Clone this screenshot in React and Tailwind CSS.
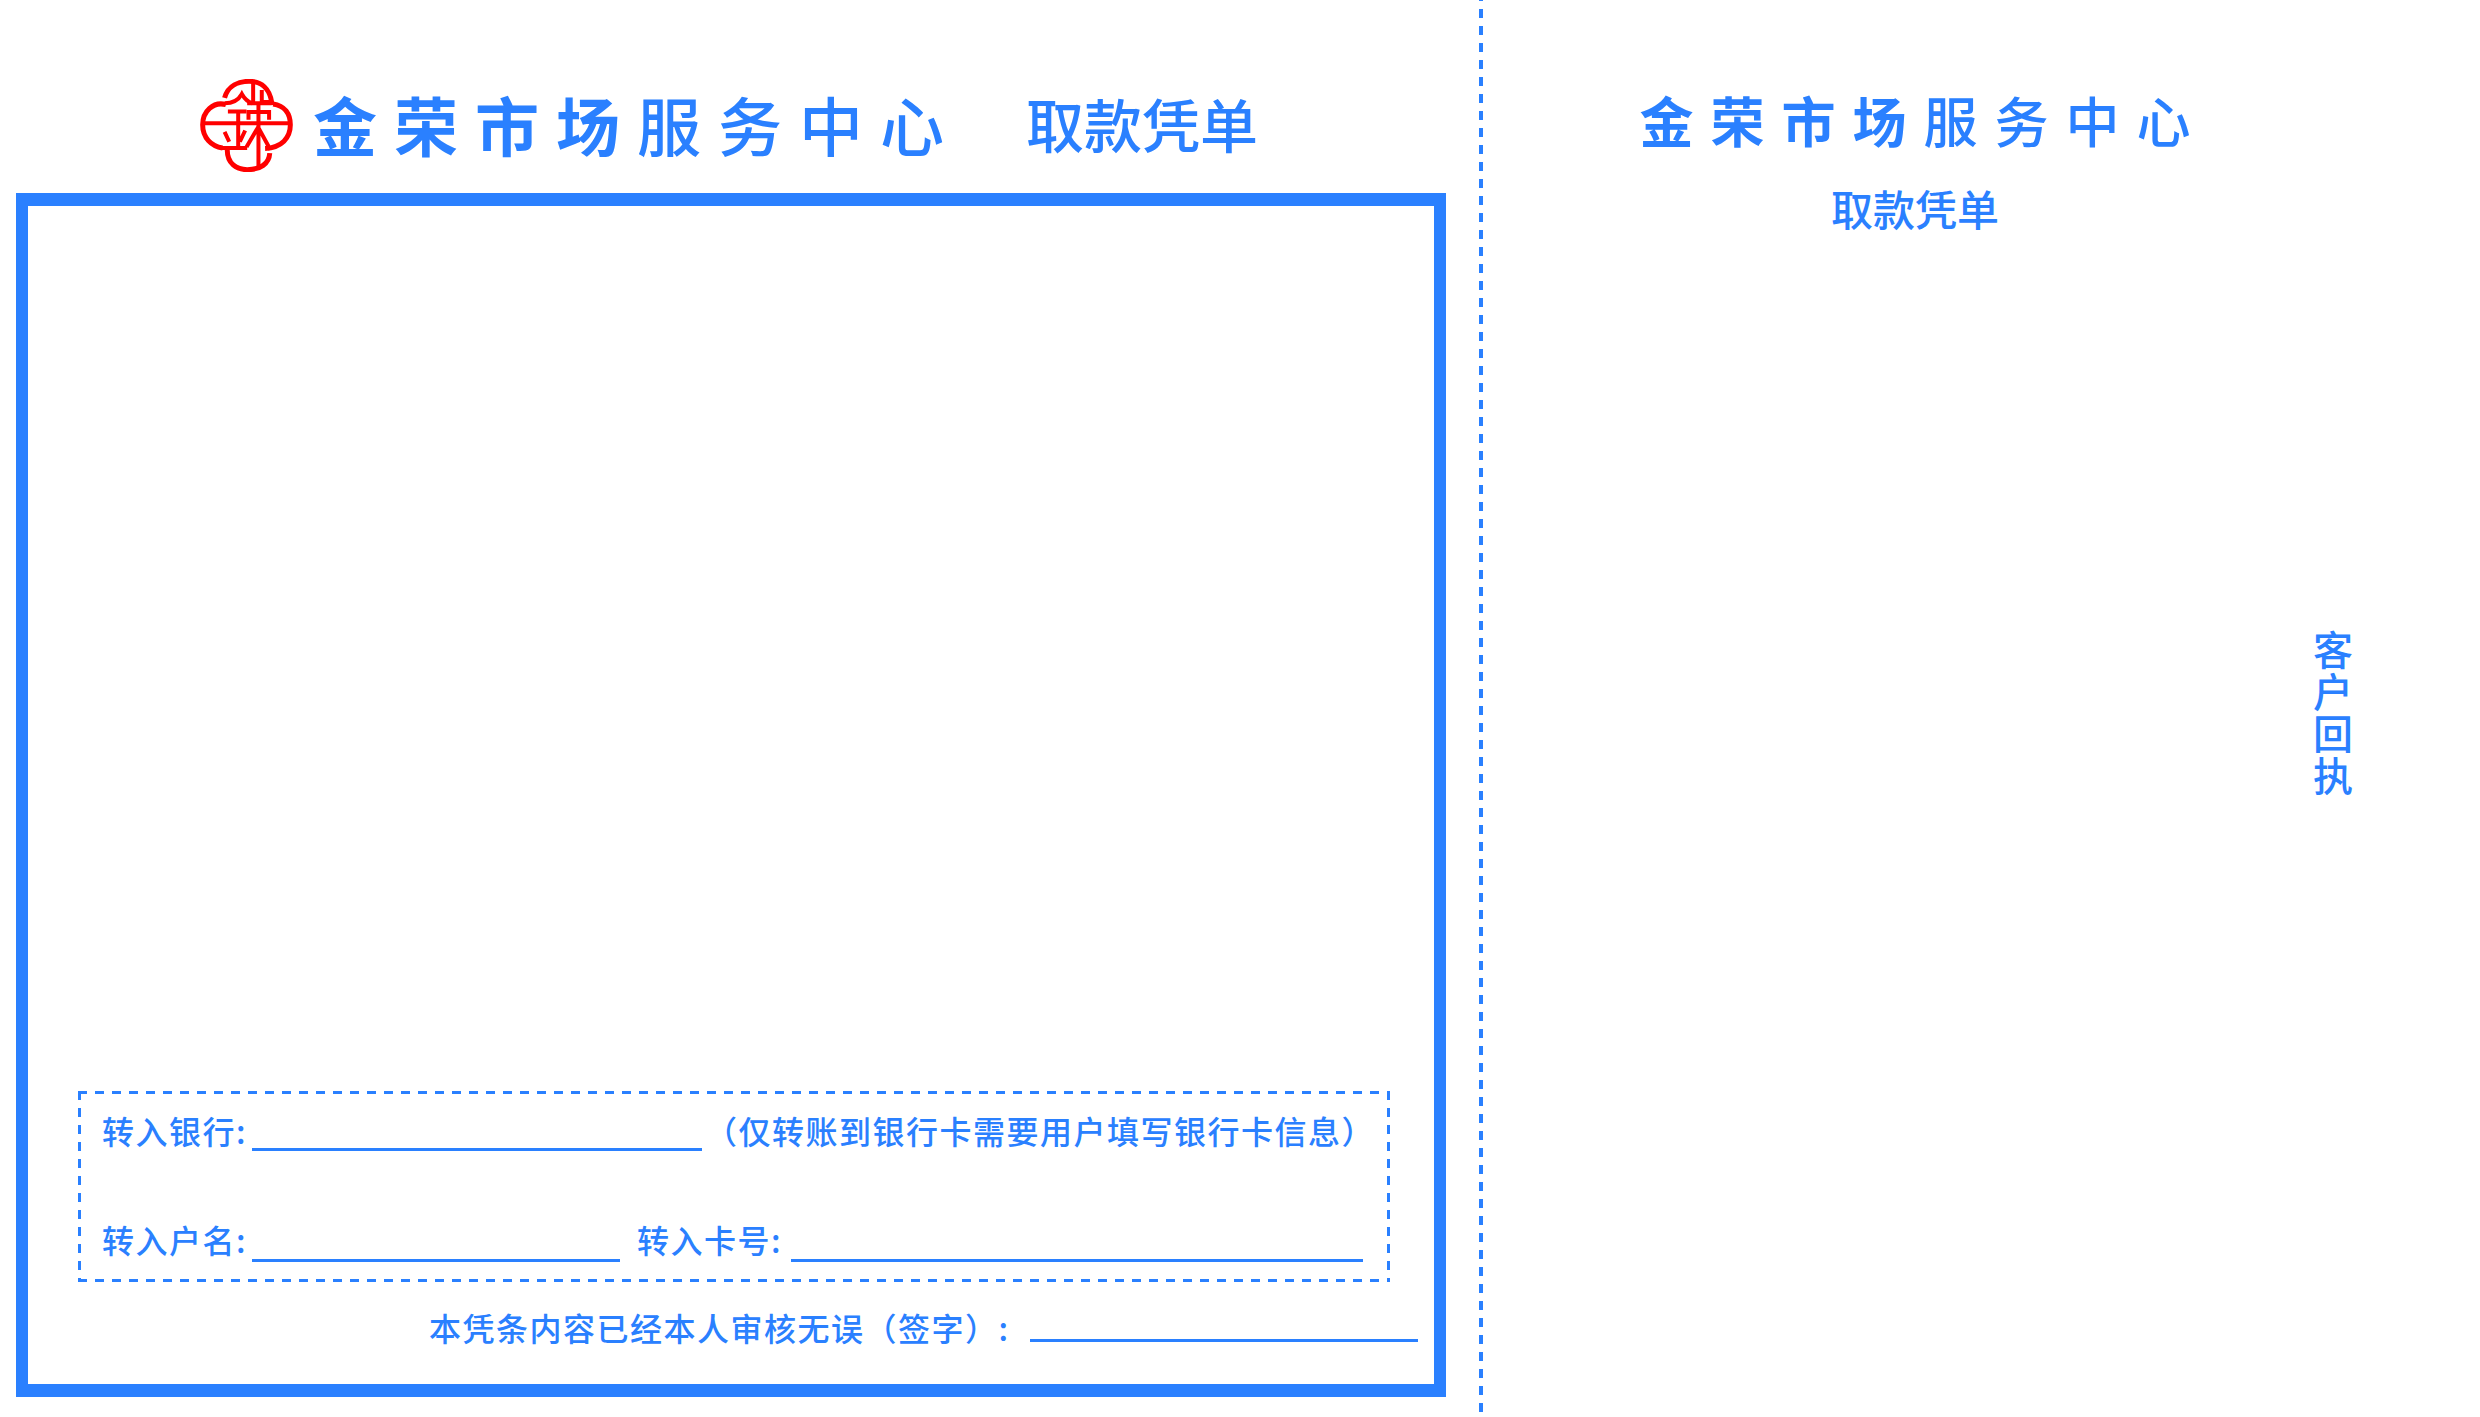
import React from 'react';

const Logo = () => (
  <svg className="w-[93px] h-[93px] shrink-0" viewBox="30 27 280 280" fill="none" stroke="#ff0000" strokeWidth="15">
    {/* clover outline */}
    <path d="M104 84C114 46 148 34 178 34C215 34 240 56 246 98H212" />
    <path d="M108 104C70 94 38 124 38 165C38 204 64 230 98 235" />
    <path d="M250 102C285 107 302 132 302 165C302 204 276 234 226 236" />
    <path d="M112 240C112 282 140 300 172 300C212 300 238 282 240 250" />
    <path d="M37 160H303" strokeWidth="12" />
    {/* jin */}
    <path d="M104 100C128 100 146 90 156 72C166 90 174 96 188 100" strokeWidth="12" />
    <path d="M114 125H170M145 125V235M95 235H172M104 186L118 216M166 182L150 216" strokeWidth="12" />
    {/* rong */}
    <path d="M190 30V96M216 60V96M172 100H246" strokeWidth="12" />
    <path d="M176 150V126H238V150M206 100V296M205 172L170 232M205 172L242 240" strokeWidth="12" />
  </svg>
);

const Line = ({ className }) => <div className={`h-[3px] bg-[#2a80ff] ${className}`} />;

const App = () => {
  return (
    <div className="w-[2480px] h-[1417px] bg-white flex text-[#2a80ff] overflow-hidden [font-family:'Noto_Sans_CJK_SC',sans-serif]">
      {/* main voucher */}
      <div className="w-[1479px] shrink-0 pl-[16px] pr-[33px] flex flex-col">
        <div className="h-[193px] shrink-0 pl-[184px] pt-[79px] flex items-start">
          <Logo />
          <div className="ml-[20px] h-[87px] flex items-center text-[64px] leading-none tracking-[17px] whitespace-nowrap">
            <span className="font-bold">金荣市场</span>
            <span className="font-medium">服务中心</span>
          </div>
          <div className="ml-[65px] h-[87px] flex items-center text-[58px] font-medium leading-none whitespace-nowrap">取款凭单</div>
        </div>

        <div className="h-[1204px] shrink-0 border-x-[12px] border-y-[13px] border-[#2a80ff] flex flex-col justify-end pb-[39px] pl-[50px] pr-[16px]">
          <div className="w-[1312px] h-[191px] pl-[24px] text-[32px] font-medium leading-[36px] tracking-[1.5px] whitespace-nowrap [background:repeating-linear-gradient(to_right,#2a80ff_0,#2a80ff_9px,transparent_9px,transparent_17px)_top/100%_3px_no-repeat,repeating-linear-gradient(to_right,#2a80ff_0,#2a80ff_9px,transparent_9px,transparent_17px)_bottom/100%_3px_no-repeat,repeating-linear-gradient(to_bottom,#2a80ff_0,#2a80ff_9px,transparent_9px,transparent_17px)_left/3px_100%_no-repeat,repeating-linear-gradient(to_bottom,#2a80ff_0,#2a80ff_9px,transparent_9px,transparent_17px)_right/3px_100%_no-repeat]">
            <div className="flex items-end pt-[21px]">
              <span>转入银行:</span>
              <Line className="w-[450px] ml-[5px] mb-[-3px]" />
              <span className="ml-[3px]">（仅转账到银行卡需要用户填写银行卡信息）</span>
            </div>
            <div className="flex items-end mt-[73px]">
              <span>转入户名:</span>
              <Line className="w-[368px] ml-[5px] mb-[-5px]" />
              <span className="ml-[17px]">转入卡号:</span>
              <Line className="w-[572px] ml-[9px] mb-[-5px]" />
            </div>
          </div>
          <div className="flex items-end mt-[27px] ml-[351px] text-[32px] font-medium leading-[36px] tracking-[1.5px] whitespace-nowrap">
            <span>本凭条内容已经本人审核无误（签字）:</span>
            <Line className="w-[388px] ml-[20px] mb-[3px]" />
          </div>
        </div>
      </div>

      {/* tear line */}
      <div className="w-[4px] shrink-0 h-full bg-[repeating-linear-gradient(to_bottom,#2a80ff_-8px,#2a80ff_1px,transparent_1px,transparent_9px)]" />

      {/* customer stub */}
      <div className="flex-1 flex">
        <div className="w-[830px] shrink-0 pl-[34px] pt-[93px] flex flex-col items-center">
          <div className="text-[54px] leading-none tracking-[17px] whitespace-nowrap pl-[17px]">
            <span className="font-bold">金荣市场</span>
            <span className="font-medium">服务中心</span>
          </div>
          <div className="mt-[40px] text-[42px] font-medium leading-none whitespace-nowrap">取款凭单</div>
        </div>
        <div className="pt-[630px]">
          <div className="[writing-mode:vertical-rl] text-[40px] font-medium leading-[40px] tracking-[2px]">客户回执</div>
        </div>
      </div>
    </div>
  );
};

export default App;
